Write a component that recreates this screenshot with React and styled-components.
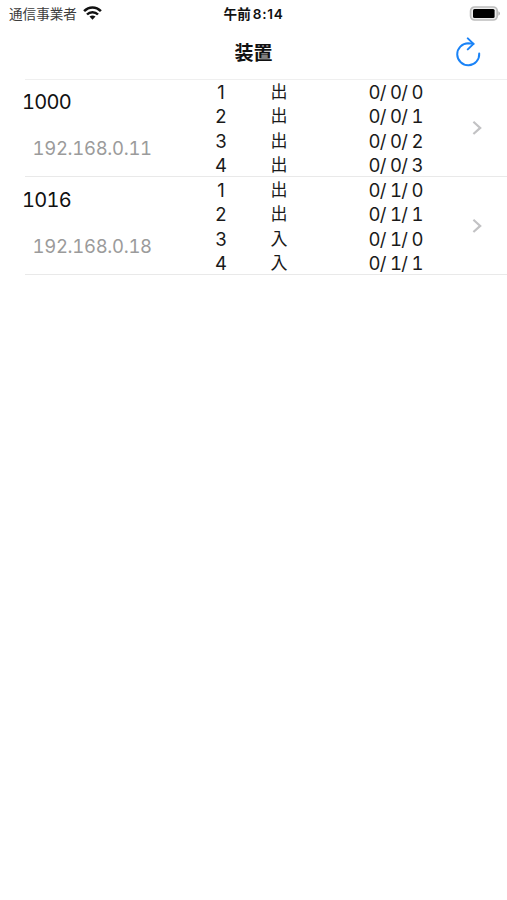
import React from "react";
import styled, { createGlobalStyle } from "styled-components";

const GlobalStyle = createGlobalStyle`
  * { box-sizing: border-box; }
  body { margin: 0; background: #fff; }
`;

const Screen = styled.main`
  width: 507px;
  height: 900px;
  overflow: hidden;
  background: #fff;
  color: #1a1a1a;
  font-family: Inter, "Noto Sans CJK JP", sans-serif;
`;

const StatusBar = styled.header`
  display: grid;
  grid-template-columns: 1fr auto 1fr;
  align-items: center;
  height: 28px;
  padding: 0 6px 0 9px;
`;

const Carrier = styled.div`
  display: flex;
  align-items: center;
  gap: 6px;
  color: #3c3c3c;
  font-size: 13.6px;
  line-height: 28px;
`;

const WifiIcon = styled.svg`
  margin-top: -2px;
`;

const Clock = styled.time`
  display: flex;
  gap: 2px;
  margin-right: 3px;
  color: #111;
  font-size: 13.6px;
  font-weight: 600;
  line-height: 28px;
`;

const ClockDigits = styled.span`
  letter-spacing: 0.7px;
`;

const BatteryIcon = styled.svg`
  justify-self: end;
  margin-top: -1px;
`;

const NavBar = styled.nav`
  display: grid;
  grid-template-columns: 1fr auto 1fr;
  align-items: center;
  height: 51px;
  padding: 0 25px;
`;

const Title = styled.h1`
  grid-column: 2;
  margin: 0;
  padding-top: 1px;
  color: #111;
  font-size: 19px;
  font-weight: 700;
  line-height: 50px;
`;

const RefreshButton = styled.button`
  justify-self: end;
  display: flex;
  margin-top: -4px;
  padding: 0;
  border: 0;
  background: none;
  color: #1a83f7;
`;

const DeviceList = styled.ul`
  margin: -0.4px 0 0 25px;
  padding: 0;
  border-top: 1px solid #efefef;
  list-style: none;
`;

const DeviceRow = styled.li`
  display: grid;
  grid-template-columns: 179px 1fr 37px;
  align-items: center;
  height: 97.8px;
  border-bottom: 1px solid #e9e9e9;
`;

const DeviceInfo = styled.div`
  align-self: start;
  margin-left: -3px;
`;

const DeviceName = styled.div`
  padding-top: 7.5px;
  color: #111;
  font-size: 20px;
  line-height: 30px;
  letter-spacing: -0.7px;
  font-feature-settings: "tnum";
`;

const DeviceAddress = styled.div`
  padding: 16px 0 0 10.5px;
  color: #9b9b9b;
  font-size: 18.5px;
  line-height: 30px;
  letter-spacing: -0.3px;
  font-feature-settings: "tnum";
`;

const PortTable = styled.div`
  display: grid;
  grid-template-rows: repeat(4, 24.4px);
  align-self: start;
`;

const Port = styled.div`
  display: grid;
  grid-template-columns: 34px 49.5px 1fr;
  align-items: center;
  padding-top: 0.4px;
  font-size: 18.5px;
  line-height: 24.4px;
  white-space: pre;
`;

const PortNumber = styled.span`
  text-align: center;
`;

const Direction = styled.span`
  justify-self: end;
  font-size: 17px;
`;

const GroupAddress = styled.span`
  padding-left: 81px;
  letter-spacing: -0.7px;
  font-feature-settings: "tnum";
`;

const Chevron = styled.svg`
  display: block;
`;

const devices = [
  {
    name: "1000",
    address: "192.168.0.11",
    ports: [["出", "0/ 0/ 0"], ["出", "0/ 0/ 1"], ["出", "0/ 0/ 2"], ["出", "0/ 0/ 3"]],
  },
  {
    name: "1016",
    address: "192.168.0.18",
    ports: [["出", "0/ 1/ 0"], ["出", "0/ 1/ 1"], ["入", "0/ 1/ 0"], ["入", "0/ 1/ 1"]],
  },
];

function Device({ device }) {
  return (
    <DeviceRow>
      <DeviceInfo>
        <DeviceName>{device.name}</DeviceName>
        <DeviceAddress>{device.address}</DeviceAddress>
      </DeviceInfo>
      <PortTable>
        {device.ports.map(([direction, group], index) => (
          <Port key={index}>
            <PortNumber>{index + 1}</PortNumber>
            <Direction>{direction}</Direction>
            <GroupAddress>{group}</GroupAddress>
          </Port>
        ))}
      </PortTable>
      <Chevron width="16" height="16" viewBox="0 0 16 16" fill="none">
        <path d="M3.4 1.8 L10.2 7.9 L3.4 14" stroke="#c2c2c4" strokeWidth="2.2" />
      </Chevron>
    </DeviceRow>
  );
}

export default function App() {
  return (
    <Screen>
      <GlobalStyle />
      <StatusBar>
        <Carrier>
          <span>通信事業者</span>
          <WifiIcon width="20" height="14" viewBox="0 0 20 14" fill="none" stroke="#111" strokeWidth="2.5">
            <path d="M1.1 5.2 C6 .1 13 .1 17.9 5.2" />
            <path d="M4 8.5 C7 5.4 12 5.4 15 8.5" />
            <path d="M6.5 10.6 Q9.5 8.5 12.5 10.6 L9.5 13.7Z" fill="#111" stroke="none" />
          </WifiIcon>
        </Carrier>
        <Clock>
          <span>午前</span>
          <ClockDigits>8:14</ClockDigits>
        </Clock>
        <BatteryIcon width="32" height="16" viewBox="0 0 32 16">
          <rect x="1.6" y="1" width="26.6" height="13" rx="4" fill="#eee" stroke="#bdbdbd" strokeWidth="1.7" />
          <rect x="4" y="3" width="21.6" height="9" rx="1.5" fill="#000" />
          <path d="M29.4 5.2 Q31 6.1 31 7.5 Q31 8.9 29.4 9.8Z" fill="#b0b0b0" />
        </BatteryIcon>
      </StatusBar>
      <NavBar>
        <Title>装置</Title>
        <RefreshButton aria-label="更新">
          <svg width="27" height="30" viewBox="0 0 27 30" fill="none" stroke="currentColor" strokeWidth="2" strokeLinecap="round" strokeLinejoin="round">
            <path d="M24.2 16.6 A11 11 0 1 1 13.2 6.3 L18.4 6.8" />
            <path d="M12.8 1.4 L18.5 6.9 L12.8 12.4" />
          </svg>
        </RefreshButton>
      </NavBar>
      <DeviceList>
        {devices.map((device) => (
          <Device key={device.name} device={device} />
        ))}
      </DeviceList>
    </Screen>
  );
}
